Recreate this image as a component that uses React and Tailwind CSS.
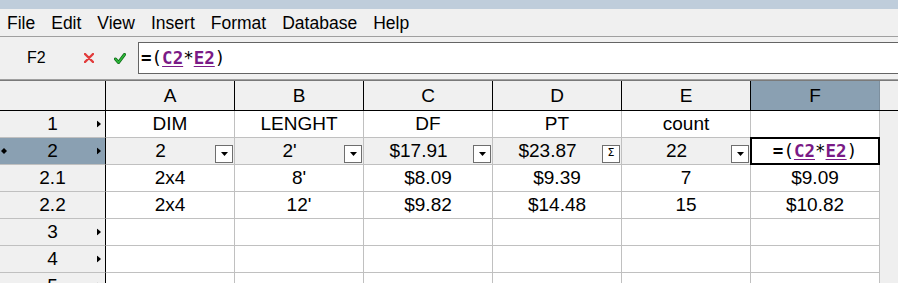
import React from 'react';

const menu = ['File', 'Edit', 'View', 'Insert', 'Format', 'Database', 'Help'];
const cols = ['A', 'B', 'C', 'D', 'E', 'F'];

const rows = [
  { label: '1', arrow: true, cells: ['DIM', 'LENGHT', 'DF', 'PT', 'count', ''] },
  { label: '2', arrow: true, active: true, cells: ['2', "2'", '$17.91', '$23.87', '22', 'formula'] },
  { label: '2.1', cells: ['2x4', "8'", '$8.09', '$9.39', '7', '$9.09'] },
  { label: '2.2', cells: ['2x4', "12'", '$9.82', '$14.48', '15', '$10.82'] },
  { label: '3', arrow: true, cells: ['', '', '', '', '', ''] },
  { label: '4', arrow: true, cells: ['', '', '', '', '', ''] },
  { label: '5', arrow: true, cells: ['', '', '', '', '', ''] },
];

function Formula() {
  return (
    <span className="font-['DejaVu_Sans_Mono',monospace] text-[17.5px] text-black">
      <span className="font-bold">=</span>(
      <span className="font-bold text-[#7a1a86] underline underline-offset-2">C2</span>*
      <span className="font-bold text-[#7a1a86] underline underline-offset-2">E2</span>)
    </span>
  );
}

function DropButton() {
  return (
    <div className="self-end mb-px mr-px w-[18px] h-[18px] border border-[#6e6e6e] bg-white flex items-center justify-center shrink-0">
      <svg width="7" height="4" viewBox="0 0 7 4"><path d="M0 0h7L3.5 4z" fill="#000" /></svg>
    </div>
  );
}

function SigmaButton() {
  return (
    <div className="self-end mb-px mr-px w-[18px] h-[18px] border border-[#6e6e6e] bg-white flex items-start justify-center shrink-0 text-[11px] leading-[14px] font-['DejaVu_Sans',sans-serif]">
      Σ
    </div>
  );
}

function Arrow() {
  return (
    <svg width="4" height="7" viewBox="0 0 4 7" className="absolute right-[4px] top-1/2 -translate-y-1/2">
      <path d="M0 0l4 3.5L0 7z" fill="#000" />
    </svg>
  );
}

export default function App() {
  return (
    <div className="w-[898px] h-[283px] overflow-hidden bg-[#f0f0f0] font-['Liberation_Sans',Arial,sans-serif] text-black">
      <div className="h-[9px] bg-[#bfcddb]" />
      <div className="h-[27px] flex items-center gap-[16px] pl-[7px] pt-[2px] text-[17.5px]">
        {menu.map((m) => (
          <span key={m}>{m}</span>
        ))}
      </div>
      <div className="h-px bg-[#a0a0a0]" />
      <div className="h-[42px] flex items-start pt-[5px]">
        <div className="w-[138px] h-[32px] flex items-center text-[16px]">
          <span className="ml-[27px] w-[50px]">F2</span>
          <svg width="10" height="10" viewBox="0 0 10 10" className="ml-[7px]">
            <path d="M1 1l8 8M9 1l-8 8" stroke="#e23b3b" strokeWidth="2.4" strokeLinecap="round" />
          </svg>
          <svg width="12" height="11" viewBox="0 0 12 11" className="ml-[20px]">
            <path d="M1.5 6l3 3.5L10.5 1.5" stroke="#0f6a18" strokeWidth="3" fill="none" strokeLinecap="round" strokeLinejoin="round" />
            <path d="M1.5 6l3 3.5L10.5 1.5" stroke="#2db83a" strokeWidth="1.6" fill="none" strokeLinecap="round" strokeLinejoin="round" />
          </svg>
        </div>
        <div className="flex-1 h-[32px] border border-r-0 border-[#646464] bg-white flex items-center pl-[2px]">
          <Formula />
        </div>
      </div>
      <div className="h-px bg-[#a0a0a0]" />
      <div className="border-t border-[#7a7a7a] text-[19px]">
        <div className="flex h-[30px] border-b border-black">
          <div className="w-[106px] border-r border-black bg-[#f0f0f0]" />
          {cols.map((c) => (
            <div
              key={c}
              className={`w-[129px] flex items-center justify-center pt-[2px] border-r ${
                c === 'F' ? 'bg-[#8aa0b2] border-[#7d8f9e]' : 'bg-[#f0f0f0] border-black'
              }`}
            >
              {c}
            </div>
          ))}
          <div className="flex-1 bg-[#efefef]" />
        </div>
        {rows.map((r) => (
          <div key={r.label} className="flex h-[27px]">
            <div
              className={`relative w-[106px] flex items-center justify-center pt-px border-r border-r-black border-b border-b-[#c0c0c0] ${
                r.active ? 'bg-[#8aa0b2]' : 'bg-[#f0f0f0]'
              }`}
            >
              {r.active && (
                <svg width="6" height="6" viewBox="0 0 6 6" className="absolute left-[1px] top-1/2 -translate-y-1/2">
                  <path d="M3 0l3 3-3 3-3-3z" fill="#000" />
                </svg>
              )}
              <span>{r.label}</span>
              {r.arrow && <Arrow />}
            </div>
            {r.cells.map((v, i) => {
              const isF2 = r.active && i === 5;
              return (
                <div
                  key={i}
                  className={`relative w-[129px] flex border-r border-b border-[#c0c0c0] ${
                    r.active && !isF2 ? 'bg-[#f0f0f0]' : 'bg-white'
                  }`}
                >
                  <div className="flex-1 flex items-center justify-center pt-px">
                    {isF2 ? <Formula /> : v}
                  </div>
                  {r.active && i !== 5 && (i === 3 ? <SigmaButton /> : <DropButton />)}
                  {isF2 && <div className="absolute -top-px -left-px -right-px -bottom-px border-2 border-black" />}
                </div>
              );
            })}
            <div className="flex-1 bg-[#efefef]" />
          </div>
        ))}
      </div>
    </div>
  );
}
